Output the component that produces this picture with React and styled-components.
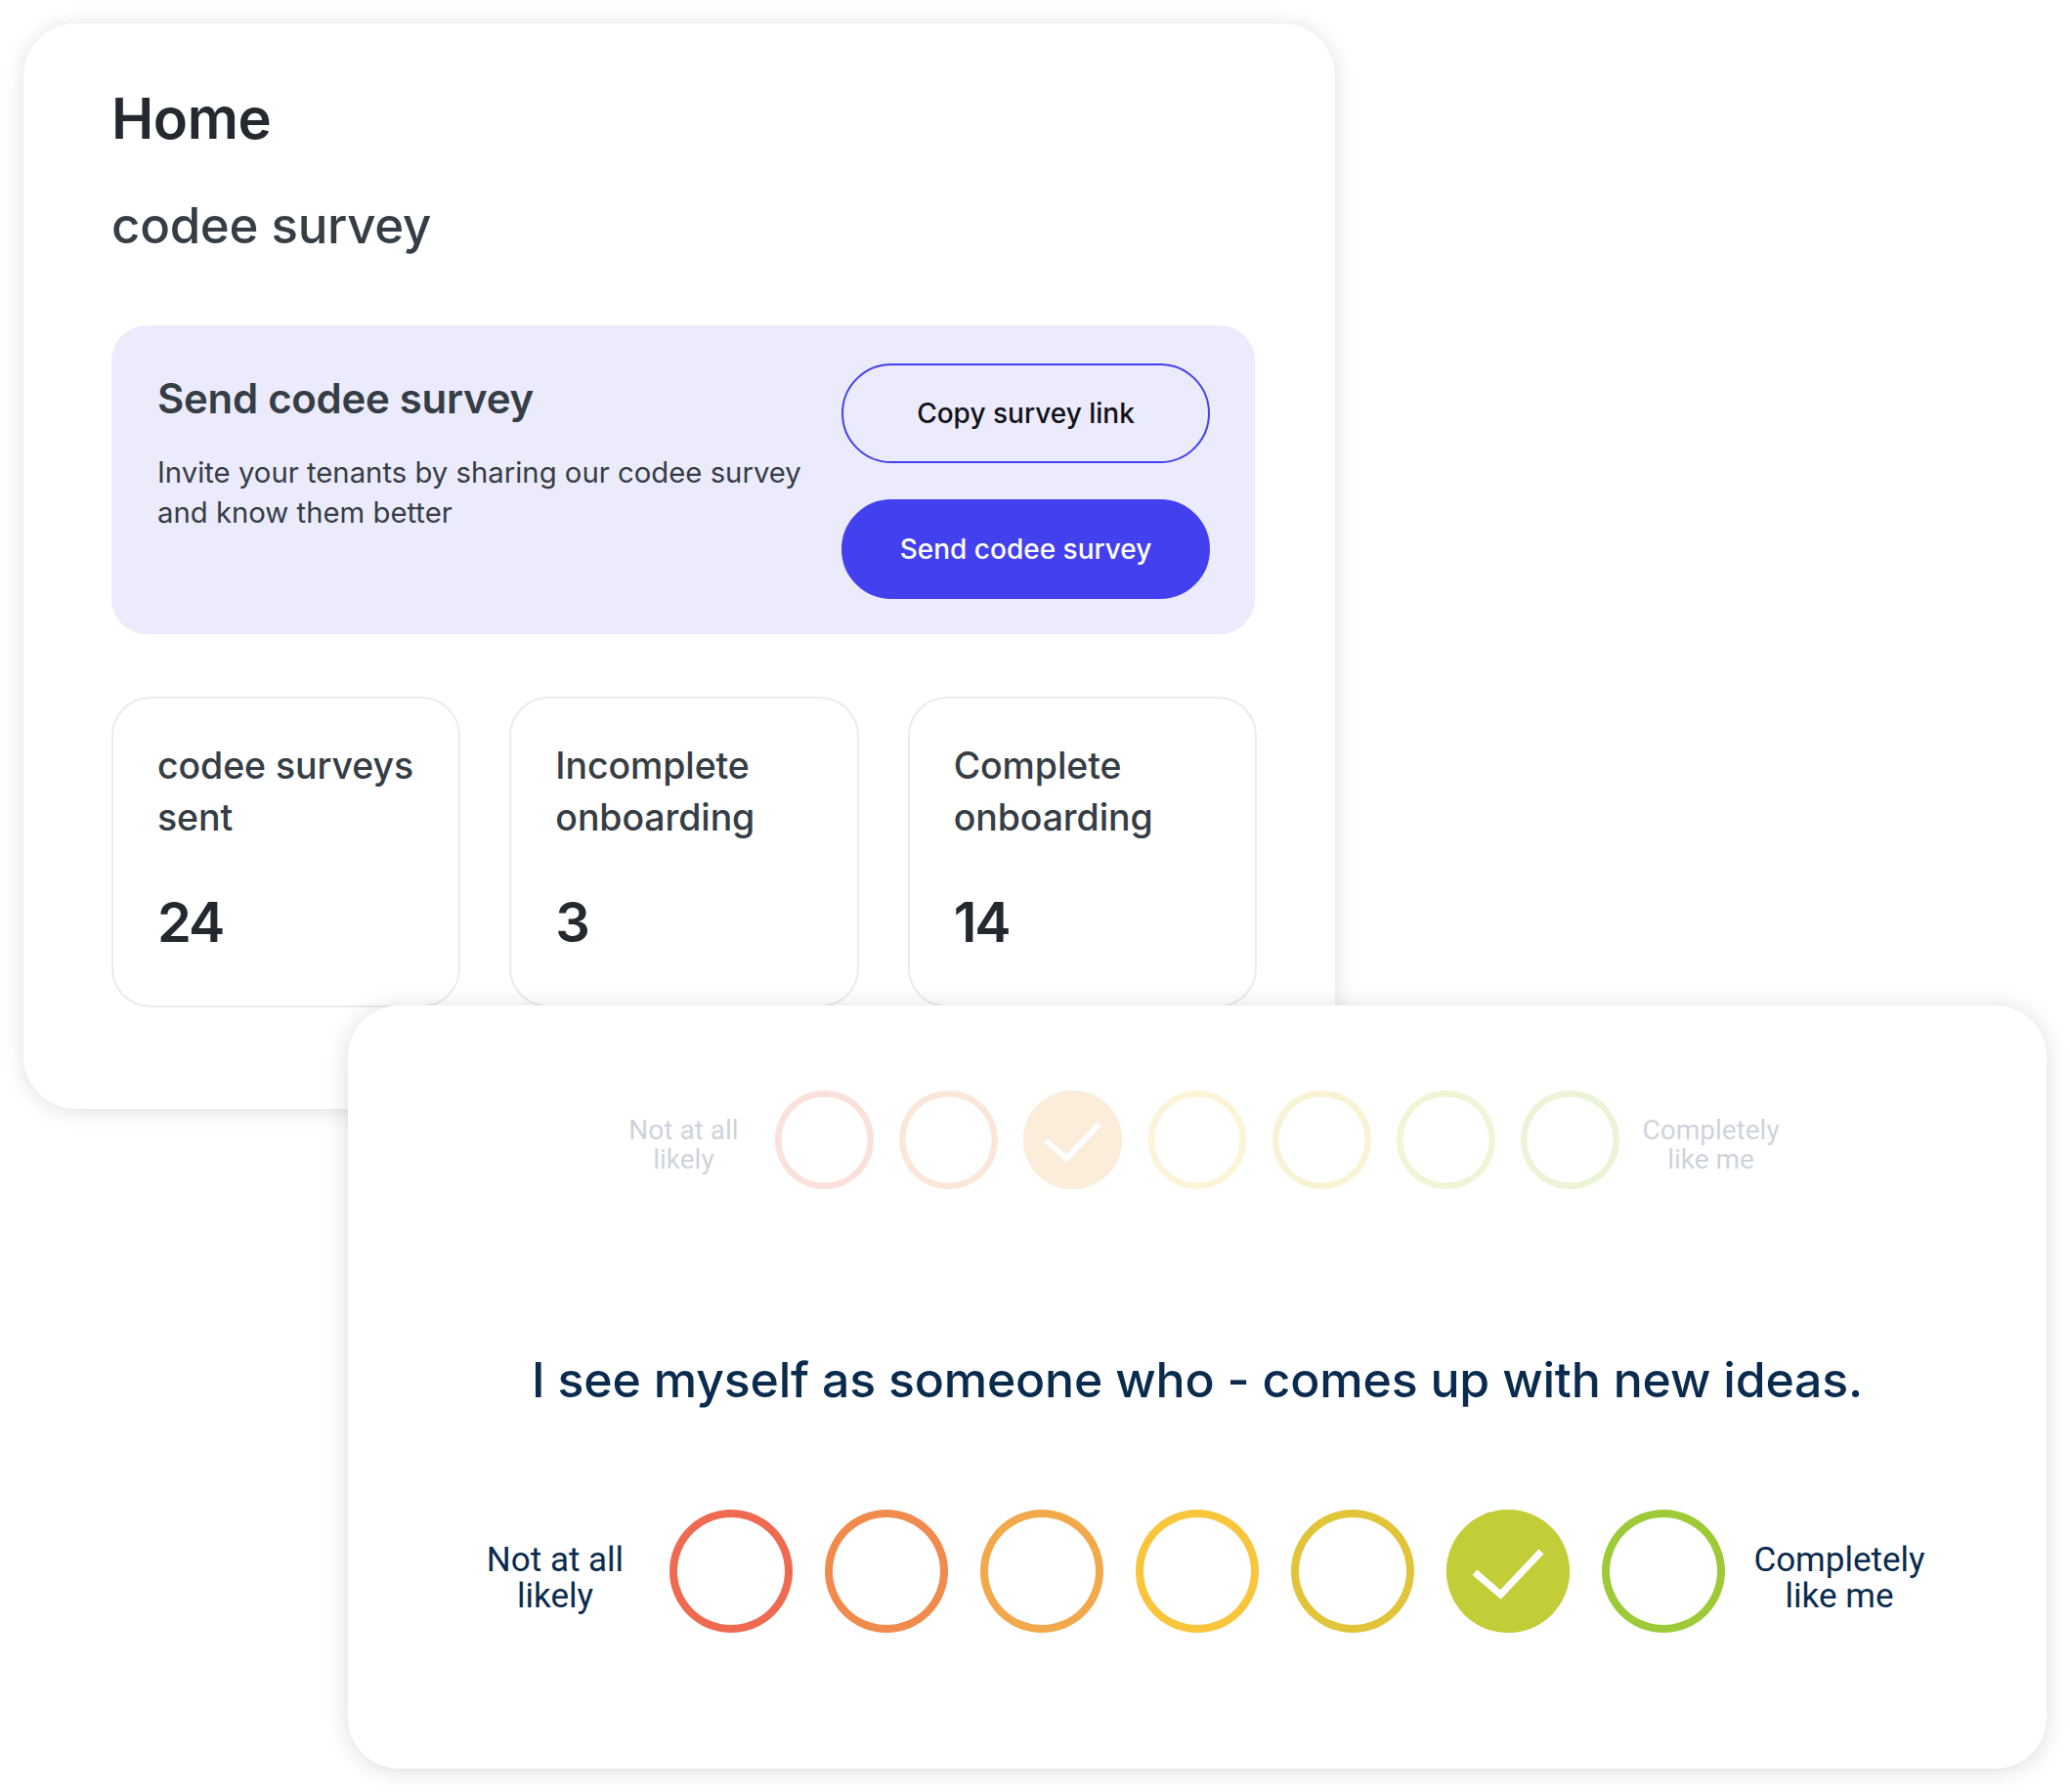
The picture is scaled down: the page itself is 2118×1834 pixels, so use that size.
import React from 'react';
import styled, { createGlobalStyle } from 'styled-components';

const Global = createGlobalStyle`
  html, body { margin: 0; padding: 0; background: #ffffff; }
  body { font-family: Inter, "Noto Sans", sans-serif; -webkit-font-smoothing: antialiased; }
  * { box-sizing: border-box; }
`;

const Stage = styled.div`
  position: relative;
  width: 2118px;
  height: 1834px;
  overflow: hidden;
  background: #ffffff;
`;

/* ---------- Back window: dashboard ---------- */
const DashboardWindow = styled.section`
  position: absolute;
  left: 24px;
  top: 24px;
  width: 1342px;
  height: 1111px;
  background: #ffffff;
  border-radius: 54px;
  box-shadow: 0 2px 22px rgba(0, 0, 0, 0.13);
  padding: 62px 81px 0 90px;
  display: flex;
  flex-direction: column;
`;

const PageTitle = styled.h1`
  margin: 0;
  font-size: 58px;
  line-height: 70px;
  font-weight: 600;
  color: #23292f;
  letter-spacing: -0.4px;
`;

const SectionTitle = styled.h2`
  margin: 45px 0 0;
  font-size: 51px;
  line-height: 60px;
  font-weight: 500;
  color: #353d45;
  letter-spacing: -0.3px;
`;

const InvitePanel = styled.div`
  margin-top: 72px;
  width: 1170px;
  height: 316px;
  background: #ecebfc;
  border-radius: 36px;
  padding: 39px 46px 34px 47px;
  display: flex;
  justify-content: space-between;
`;

const InviteText = styled.div`
  display: flex;
  flex-direction: column;
`;

const InviteHeading = styled.h3`
  margin: 10px 0 0;
  font-size: 42px;
  line-height: 52px;
  font-weight: 600;
  color: #353d45;
  letter-spacing: -0.3px;
`;

const InviteBody = styled.p`
  margin: 29px 0 0;
  font-size: 29.3px;
  line-height: 41px;
  font-weight: 400;
  color: #353d45;
`;

const ButtonStack = styled.div`
  display: flex;
  flex-direction: column;
  gap: 37px;
`;

const PillButton = styled.button`
  width: 377px;
  height: 102px;
  border-radius: 51px;
  font-family: Inter, "Noto Sans", sans-serif;
  font-size: 28px;
  font-weight: 500;
  cursor: pointer;
  border: 2px solid #4340f0;
  background: ${p => (p.$primary ? '#4340f0' : 'transparent')};
  color: ${p => (p.$primary ? '#ffffff' : '#111318')};
`;

const StatGrid = styled.div`
  margin-top: 64px;
  width: 1172px;
  display: grid;
  grid-template-columns: repeat(3, 1fr);
  gap: 50px;
`;

const StatCard = styled.div`
  height: 318px;
  border: 2px solid #ebebeb;
  border-radius: 40px;
  background: #ffffff;
  padding: 42px 24px 0 45px;
`;

const StatLabel = styled.div`
  font-size: 37.5px;
  line-height: 53px;
  font-weight: 500;
  color: #353d45;
  letter-spacing: -0.1px;
`;

const StatValue = styled.div`
  margin-top: 48px;
  font-size: 56px;
  line-height: 66px;
  font-weight: 600;
  color: #23292f;
  letter-spacing: -2px;
`;

/* ---------- Front window: survey question ---------- */
const SurveyWindow = styled.section`
  position: absolute;
  left: 356px;
  top: 1029px;
  width: 1738px;
  height: 781px;
  background: #ffffff;
  border-radius: 52px;
  box-shadow: 0 2px 24px rgba(0, 0, 0, 0.14);
  display: flex;
  flex-direction: column;
  align-items: center;
  padding-top: 87px;
`;

const ScaleRow = styled.div`
  display: flex;
  align-items: center;
  opacity: ${p => (p.$faded ? 0.2 : 1)};
  margin-top: ${p => p.$top}px;
`;

const ScaleLabel = styled.div`
  width: ${p => 196 * p.$s}px;
  margin: ${p => (p.$side === 'left' ? `0 ${19 * p.$s}px 0 0` : `0 0 0 ${19 * p.$s}px`)};
  padding-top: ${p => 14 * p.$s}px;
  text-align: center;
  font-family: Roboto, "Liberation Sans", sans-serif;
  font-size: ${p => 35 * p.$s}px;
  line-height: ${p => 37 * p.$s}px;
  font-weight: 400;
  color: #0a2b4d;
`;

const Dots = styled.div`
  display: flex;
  gap: ${p => 33 * p.$s}px;
`;

const Dot = styled.span`
  position: relative;
  display: block;
  width: ${p => 126 * p.$s}px;
  height: ${p => 126 * p.$s}px;
  border-radius: 50%;
  box-shadow: inset 0 0 0 ${p => 8 * p.$s}px ${p => p.$color};
  background: ${p => (p.$selected ? p.$color : 'transparent')};
  svg { position: absolute; inset: 0; width: 100%; height: 100%; }
`;

const Question = styled.h2`
  margin: 165px 0 0;
  font-size: 50px;
  line-height: 60px;
  font-weight: 500;
  color: #0a2b4d;
  text-align: center;
  letter-spacing: -0.2px;
`;

const COLORS = ['#ee6a50', '#f08a4d', '#f2a94c', '#f8c53b', '#e2c43a', '#c2cd38', '#9dcb38'];

function Check() {
  return (
    <svg viewBox="0 0 100 100" aria-hidden="true">
      <polyline points="23,51 44,69 77,34" fill="none" stroke="#ffffff" strokeWidth="5.6" />
    </svg>
  );
}

function RatingScale({ s, selected, faded, top }) {
  return (
    <ScaleRow $faded={faded} $top={top}>
      <ScaleLabel $s={s} $side="left">Not at all<br />likely</ScaleLabel>
      <Dots $s={s}>
        {COLORS.map((c, i) => (
          <Dot key={c} $s={s} $color={c} $selected={i === selected}>
            {i === selected && <Check />}
          </Dot>
        ))}
      </Dots>
      <ScaleLabel $s={s} $side="right">Completely<br />like me</ScaleLabel>
    </ScaleRow>
  );
}

const STATS = [
  { label: 'codee surveys sent', value: '24' },
  { label: 'Incomplete onboarding', value: '3' },
  { label: 'Complete onboarding', value: '14' },
];

export default function App() {
  return (
    <>
      <Global />
      <Stage>
        <DashboardWindow>
          <PageTitle>Home</PageTitle>
          <SectionTitle>codee survey</SectionTitle>
          <InvitePanel>
            <InviteText>
              <InviteHeading>Send codee survey</InviteHeading>
              <InviteBody>
                Invite your tenants by sharing our codee survey<br />and know them better
              </InviteBody>
            </InviteText>
            <ButtonStack>
              <PillButton>Copy survey link</PillButton>
              <PillButton $primary>Send codee survey</PillButton>
            </ButtonStack>
          </InvitePanel>
          <StatGrid>
            {STATS.map(st => (
              <StatCard key={st.label}>
                <StatLabel>{st.label}</StatLabel>
                <StatValue>{st.value}</StatValue>
              </StatCard>
            ))}
          </StatGrid>
        </DashboardWindow>

        <SurveyWindow>
          <RatingScale s={0.8} selected={2} faded top={0} />
          <Question>I see myself as someone who - comes up with new ideas.</Question>
          <RatingScale s={1} selected={5} top={103} />
        </SurveyWindow>
      </Stage>
    </>
  );
}
